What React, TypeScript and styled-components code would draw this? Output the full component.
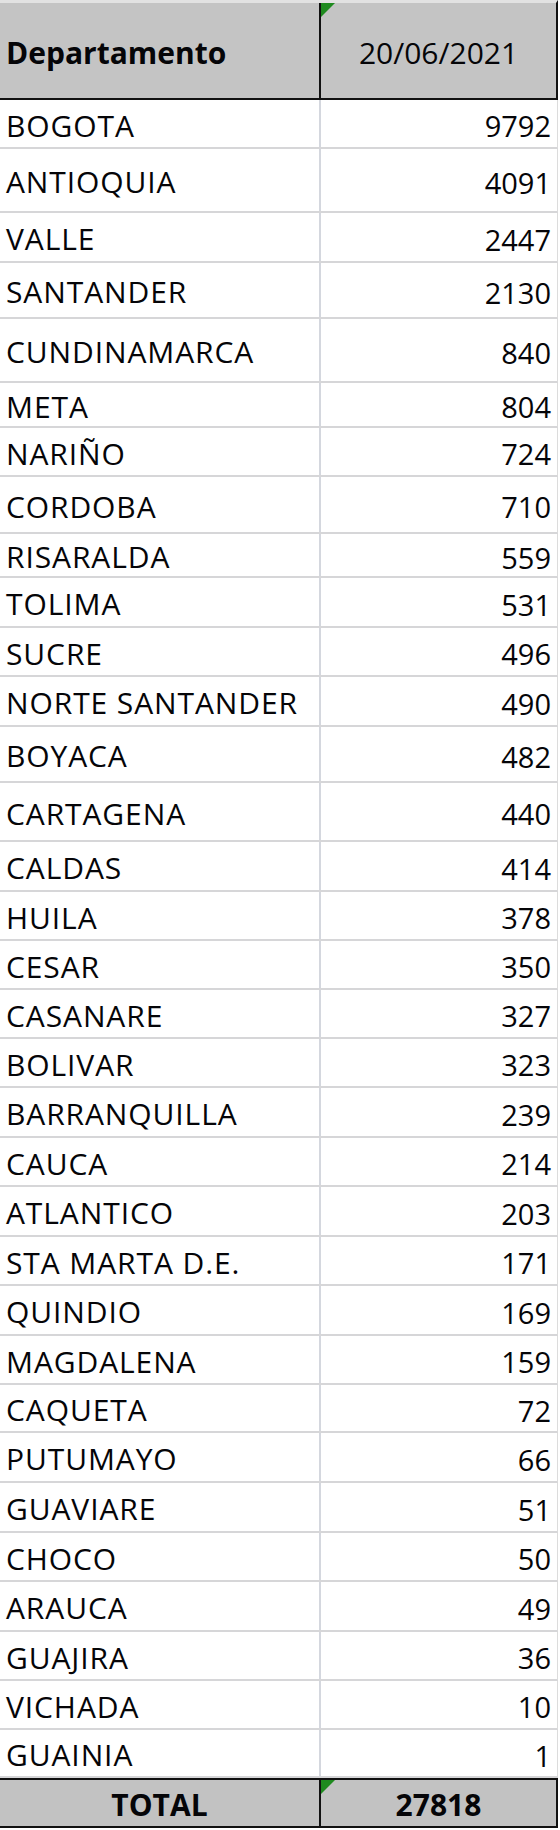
import styled, { createGlobalStyle, css } from 'styled-components';

const GlobalStyle = createGlobalStyle`
	html, body {
		margin: 0;
		padding: 0;
		background: #ffffff;
	}
	body {
		font-family: 'Open Sans', 'Liberation Sans', sans-serif;
		color: #050508;
	}
`;

const Sheet = styled.div`
	width: 558px;
	display: flex;
	flex-direction: column;
`;

const Row = styled.div<{ $height: number; $kind: 'head' | 'body' | 'foot' }>(
	({ $height, $kind }) => css`
		display: grid;
		grid-template-columns: 319px 1fr;
		box-sizing: border-box;
		height: ${$height}px;
		${$kind === 'head' &&
		css`
			background: #c4c4c4;
			border-top: 3px solid #e2e2e2;
			border-bottom: 2px solid #111111;
			border-right: 2px solid #111111;
		`}
		${$kind === 'body' &&
		css`
			background: #ffffff;
			border-bottom: 2px solid #d6d6d8;
			border-right: 1px solid #dcdcdc;
		`}
		${$kind === 'foot' &&
		css`
			background: #c2c2c2;
			border-top: 2px solid #111111;
			border-bottom: 2px solid #111111;
			border-right: 2px solid #111111;
		`}
	`
);

const Cell = styled.div<{ $align: 'left' | 'center' | 'right'; $strong?: boolean; $divider: string }>(
	({ $align, $strong, $divider }) => css`
		position: relative;
		display: flex;
		align-items: center;
		justify-content: ${$align === 'left' ? 'flex-start' : $align === 'right' ? 'flex-end' : 'center'};
		box-sizing: border-box;
		padding: 4px ${$align === 'right' ? '6px' : '0'} 0 ${$align === 'left' ? '6px' : '0'};
		border-left: ${$divider};
		font-size: 30px;
		font-weight: ${$strong ? 700 : 500};
		line-height: 1;
		white-space: nowrap;
	`
);

const Name = styled.span`
	letter-spacing: 0.9px;
`;

const Figure = styled.span`
	font-size: 29px;
`;

const Marker = styled.span`
	position: absolute;
	top: 0;
	left: 0;
	width: 0;
	height: 0;
	border-top: 14px solid #1f8a1f;
	border-right: 14px solid transparent;
`;

const rows: [string, number, number][] = [
	['BOGOTA', 9792, 49],
	['ANTIOQUIA', 4091, 64],
	['VALLE', 2447, 50],
	['SANTANDER', 2130, 56],
	['CUNDINAMARCA', 840, 64],
	['META', 804, 45],
	['NARIÑO', 724, 49],
	['CORDOBA', 710, 57],
	['RISARALDA', 559, 44],
	['TOLIMA', 531, 50],
	['SUCRE', 496, 49],
	['NORTE SANTANDER', 490, 50],
	['BOYACA', 482, 56],
	['CARTAGENA', 440, 59],
	['CALDAS', 414, 50],
	['HUILA', 378, 49],
	['CESAR', 350, 49],
	['CASANARE', 327, 49],
	['BOLIVAR', 323, 49],
	['BARRANQUILLA', 239, 50],
	['CAUCA', 214, 49],
	['ATLANTICO', 203, 50],
	['STA MARTA D.E.', 171, 49],
	['QUINDIO', 169, 50],
	['MAGDALENA', 159, 49],
	['CAQUETA', 72, 48],
	['PUTUMAYO', 66, 50],
	['GUAVIARE', 51, 50],
	['CHOCO', 50, 49],
	['ARAUCA', 49, 50],
	['GUAJIRA', 36, 49],
	['VICHADA', 10, 49],
	['GUAINIA', 1, 48],
];

const total = rows.reduce((sum, [, value]) => sum + value, 0);

export default function App() {
	return (
		<>
			<GlobalStyle />
			<Sheet>
				<Row $height={100} $kind="head">
					<Cell $align="left" $strong $divider="none">
						Departamento
					</Cell>
					<Cell $align="center" $divider="2px solid #111111">
						<Marker />
						20/06/2021
					</Cell>
				</Row>
				{rows.map(([name, value, height]) => (
					<Row key={name} $height={height} $kind="body">
						<Cell $align="left" $divider="none">
							<Name>{name}</Name>
						</Cell>
						<Cell $align="right" $divider="2px solid #d4d7de">
							<Figure>{value}</Figure>
						</Cell>
					</Row>
				))}
				<Row $height={50} $kind="foot">
					<Cell $align="center" $strong $divider="none">
						TOTAL
					</Cell>
					<Cell $align="center" $strong $divider="2px solid #111111">
						<Marker />
						{total}
					</Cell>
				</Row>
			</Sheet>
		</>
	);
}
